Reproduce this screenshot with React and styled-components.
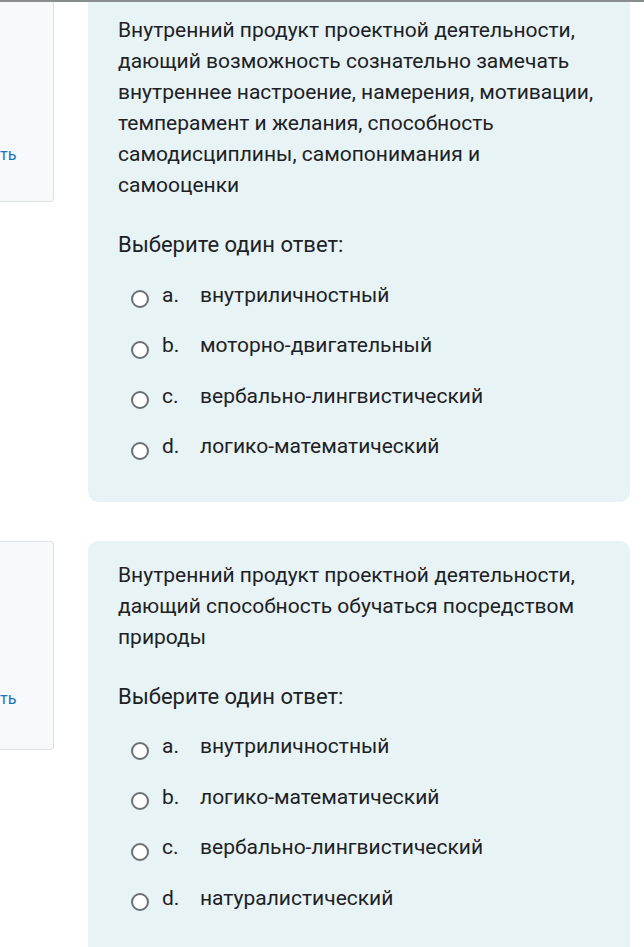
import React from "react";
import styled, { createGlobalStyle } from "styled-components";

const Global = createGlobalStyle`
  html, body { margin: 0; padding: 0; background: #fff; }
  body { font-family: Roboto, "Noto Sans", "Liberation Sans", sans-serif; color: #1d2125; }
`;

const Page = styled.div`
  width: 644px;
  height: 947px;
  overflow: hidden;
  border-top: 2px solid #8a8d90;
  box-sizing: border-box;
`;

const Row = styled.div`
  display: flex;
  align-items: flex-start;
  gap: 34px;
  padding-right: 14px;
  margin-top: ${(p) => p.$gap}px;
`;

const InfoBox = styled.div`
  flex: 0 0 54px;
  height: ${(p) => p.$h}px;
  box-sizing: border-box;
  background: #f8f9fa;
  border: 1px solid #dee2e6;
  border-left: none;
  border-top: ${(p) => (p.$clipped ? "none" : "1px solid #dee2e6")};
  border-radius: ${(p) => (p.$clipped ? "0 0 4px 0" : "0 4px 4px 0")};
  display: flex;
  flex-direction: column;
  justify-content: flex-end;
  padding-bottom: ${(p) => p.$pb}px;
  overflow: hidden;
`;

const FlagLink = styled.span`
  font-size: 16px;
  color: #1a73c4;
  line-height: 18px;
`;

const Panel = styled.div`
  flex: 1;
  box-sizing: border-box;
  background: #e7f3f5;
  border-radius: ${(p) => (p.$clipped ? "0 0 10px 10px" : "10px 10px 0 0")};
  padding: ${(p) => p.$pt}px 30px ${(p) => p.$pb}px 30px;
  min-height: ${(p) => p.$mh || 0}px;
`;

const QText = styled.p`
  margin: 0;
  font-size: 21px;
  line-height: 31px;
  color: #1d2125;
`;

const Prompt = styled.div`
  margin-top: 28px;
  font-size: 22px;
  line-height: 31px;
  color: #1d2125;
`;

const Options = styled.div`
  display: flex;
  flex-direction: column;
  gap: 19.5px;
  margin-top: 19px;
  padding-left: 13px;
`;

const Option = styled.label`
  display: flex;
  align-items: center;
  height: 31px;
  font-size: 21px;
  color: #1d2125;
`;

const Radio = styled.span`
  flex: 0 0 auto;
  width: 18px;
  height: 18px;
  box-sizing: border-box;
  border: 2px solid #6a6f74;
  border-radius: 50%;
  background: #fff;
  margin-top: 9px;
  margin-right: 13px;
`;

const Letter = styled.span`
  width: 38px;
`;

const questions = [
  {
    text:
      "Внутренний продукт проектной деятельности, дающий возможность сознательно замечать внутреннее настроение, намерения, мотивации, темперамент и желания, способность самодисциплины, самопонимания и самооценки",
    options: [
      "внутриличностный",
      "моторно-двигательный",
      "вербально-лингвистический",
      "логико-математический",
    ],
  },
  {
    text:
      "Внутренний продукт проектной деятельности, дающий способность обучаться посредством природы",
    options: [
      "внутриличностный",
      "логико-математический",
      "вербально-лингвистический",
      "натуралистический",
    ],
  },
];

const letters = ["a.", "b.", "c.", "d."];

function Question({ q, first }) {
  return (
    <Row $gap={first ? 0 : 39}>
      <InfoBox $clipped={first} $h={first ? 200 : 209} $pb={first ? 37 : 41}>
        <FlagLink>ть</FlagLink>
      </InfoBox>
      <Panel $clipped={first} $pt={first ? 13 : 19} $pb={first ? 40 : 60} $mh={first ? 0 : 420}>
        <QText>{q.text}</QText>
        <Prompt>Выберите один ответ:</Prompt>
        <Options>
          {q.options.map((o, i) => (
            <Option key={i}>
              <Radio />
              <Letter>{letters[i]}</Letter>
              <span>{o}</span>
            </Option>
          ))}
        </Options>
      </Panel>
    </Row>
  );
}

export default function App() {
  return (
    <>
      <Global />
      <Page>
        {questions.map((q, i) => (
          <Question key={i} q={q} first={i === 0} />
        ))}
      </Page>
    </>
  );
}
